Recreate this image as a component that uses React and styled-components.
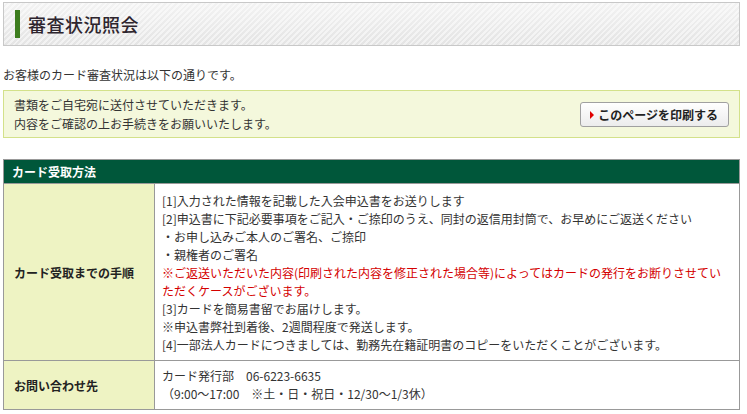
import React from 'react';
import styled, { createGlobalStyle } from 'styled-components';

const GlobalStyle = createGlobalStyle`
  body {
    margin: 0;
    background: #fff;
    font-family: "Noto Sans CJK JP", "Noto Sans", sans-serif;
    font-size: 12px;
    color: #333;
  }
`

const Page = styled.div`
  width: 737px;
  padding: 2px 0 0 3px;
`

const TitleBox = styled.div`
  height: 42px;
  border: 1px solid #c8c8c8;
  display: flex;
  align-items: center;
  padding-left: 11px;
  background:
    linear-gradient(to bottom, rgba(255,255,255,0.55), rgba(255,255,255,0)),
    repeating-linear-gradient(-45deg, #f2f2f2 0px, #f2f2f2 2px, #e4e4e4 2px, #e4e4e4 4px);
`

const TitleBar = styled.span`
  width: 5px;
  height: 28px;
  background: #3d7d1e;
  margin-right: 8px;
`

const Title = styled.h1`
  margin: 0;
  font-size: 18px;
  font-weight: 500;
  color: #2e252e;
  letter-spacing: 0.5px;
`

const Lead = styled.p`
  margin: 20px 0 6px;
  line-height: 18px;
`

const Notice = styled.div`
  display: flex;
  align-items: center;
  justify-content: space-between;
  background: #f4f8dc;
  border: 1px solid #d3e18a;
  padding: 5px 10px 4px 10px;
  line-height: 18.5px;
`

const PrintButton = styled.button`
  display: flex;
  align-items: center;
  gap: 4px;
  height: 25px;
  padding: 0 10px 0 9px;
  border: 1px solid #a0a0a0;
  border-radius: 3px;
  background: linear-gradient(to bottom, #ffffff, #ececec);
  font-family: inherit;
  font-size: 12px;
  font-weight: bold;
  color: #222;
  cursor: pointer;
`

const Arrow = styled.span`
  width: 0;
  height: 0;
  border-top: 4px solid transparent;
  border-bottom: 4px solid transparent;
  border-left: 4px solid #e00000;
`

const Table = styled.table`
  width: 100%;
  margin-top: 21px;
  border-collapse: collapse;
  border: 1px solid #999;
`

const HeadCell = styled.th`
  background: #00573a;
  color: #fff;
  text-align: left;
  font-weight: bold;
  height: 23px;
  padding: 0 8px;
  border: 1px solid #999;
`

const Label = styled.th`
  width: 130px;
  background: #eef3c3;
  text-align: left;
  font-weight: bold;
  color: #222;
  padding: 0 10px;
  border: 1px solid #999;
`

const Cell = styled.td`
  padding: ${(p) => p.pad || '8px 7px 6px'};
  border: 1px solid #999;
  line-height: 18px;
  white-space: nowrap;
`

const Red = styled.span`
  color: #d40000;
`

const App = () => {
  return (
    <>
      <GlobalStyle />
      <Page>
        <TitleBox>
          <TitleBar />
          <Title>審査状況照会</Title>
        </TitleBox>

        <Lead>お客様のカード審査状況は以下の通りです。</Lead>

        <Notice>
          <div>
            書類をご自宅宛に送付させていただきます。<br />
            内容をご確認の上お手続きをお願いいたします。
          </div>
          <PrintButton>
            <Arrow />
            このページを印刷する
          </PrintButton>
        </Notice>

        <Table>
          <tbody>
            <tr>
              <HeadCell colSpan={2}>カード受取方法</HeadCell>
            </tr>
            <tr>
              <Label>カード受取までの手順</Label>
              <Cell>
                [1]入力された情報を記載した入会申込書をお送りします<br />
                [2]申込書に下記必要事項をご記入・ご捺印のうえ、同封の返信用封筒で、お早めにご返送ください<br />
                ・お申し込みご本人のご署名、ご捺印<br />
                ・親権者のご署名<br />
                <Red>
                  ※ご返送いただいた内容(印刷された内容を修正された場合等)によってはカードの発行をお断りさせてい<br />
                  ただくケースがございます。
                </Red><br />
                [3]カードを簡易書留でお届けします。<br />
                ※申込書弊社到着後、2週間程度で発送します。<br />
                [4]一部法人カードにつきましては、勤務先在籍証明書のコピーをいただくことがございます。
              </Cell>
            </tr>
            <tr>
              <Label>お問い合わせ先</Label>
              <Cell pad="6px 7px">
                カード発行部　06-6223-6635<br />
                （9:00～17:00　※土・日・祝日・12/30～1/3休）
              </Cell>
            </tr>
          </tbody>
        </Table>
      </Page>
    </>
  );
}

export default App;
